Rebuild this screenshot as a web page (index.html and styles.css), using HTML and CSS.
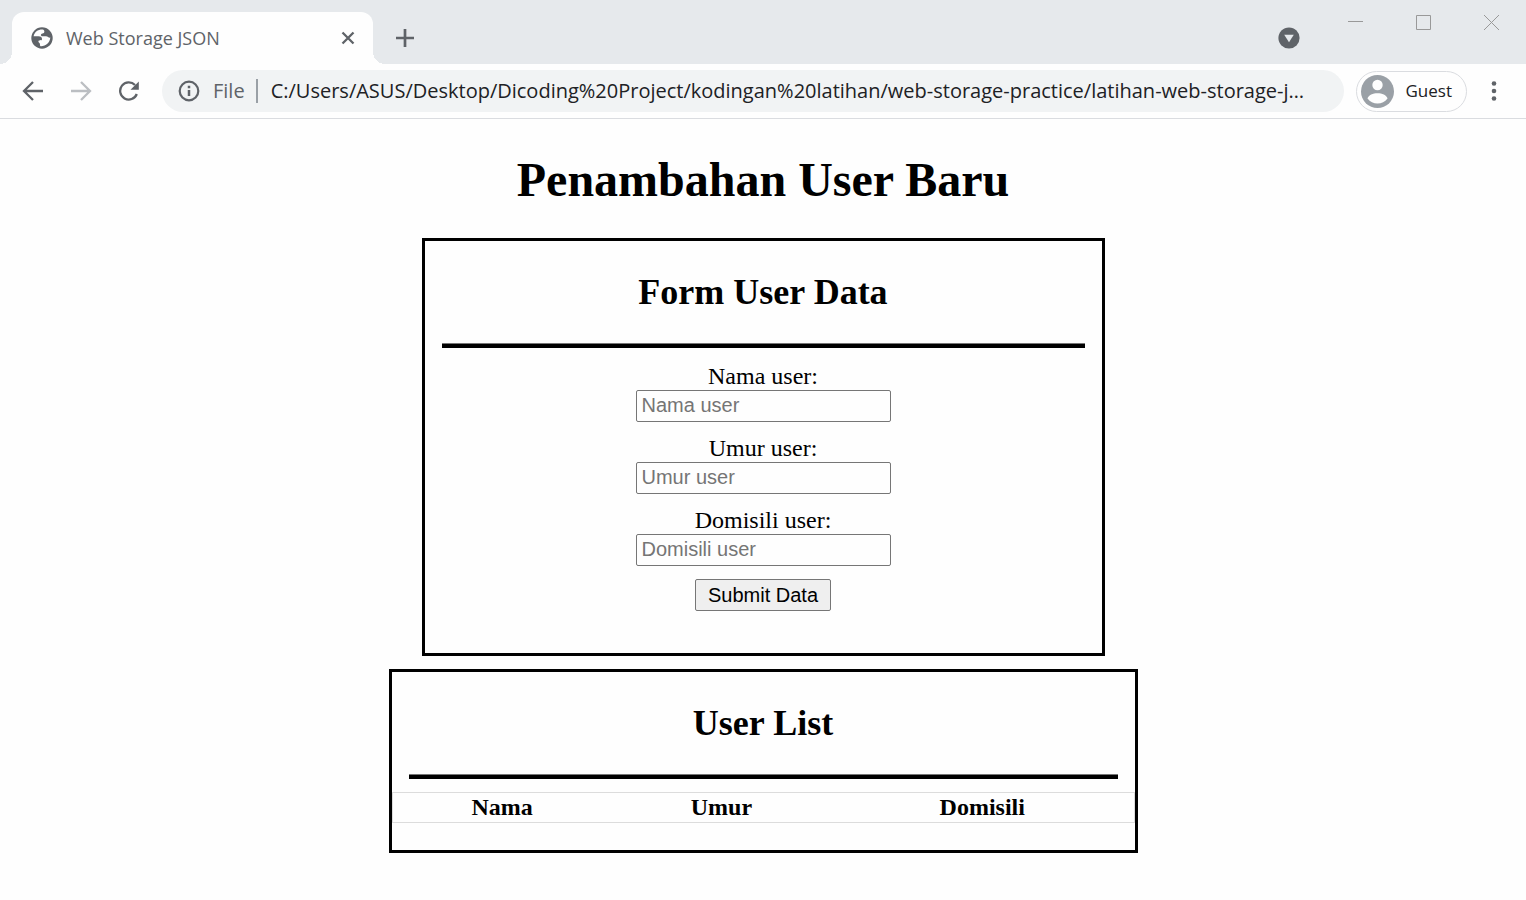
FILE: index.html
```html
<!DOCTYPE html>
<html lang="id">
<head>
<meta charset="utf-8">
<title>Web Storage JSON</title>
<link rel="stylesheet" href="styles.css">
</head>
<body>
<header class="browser">
  <div class="tab-strip">
    <div class="tab">
      <svg class="globe" viewBox="0 0 22 22" width="22" height="22" aria-hidden="true"><circle cx="11" cy="11" r="10.7" fill="#5f6368"/><path d="M12 2.500C7 2.200 3.500 5 2.600 9.200H7.500C10 9.200 11 10.500 11 12C11.200 13.200 10 13.400 8.200 13.400C7 13.400 7.200 15 8.400 16C9.500 17 8.500 18.500 9.500 19.300C14.500 19.600 19 16 19.300 10.600C17.500 11 17 9.300 15 9.300H11.500C9.300 9.200 9.500 6.800 11.500 6.500C13.800 6.300 14 3.600 12 2.500Z" fill="#fefefe"/></svg>
      <span class="tab-title">Web Storage JSON</span>
      <button class="icon-button" aria-label="Close tab"><svg viewBox="0 0 14 14" width="14" height="14"><path d="M1.5 1.5l11 11M12.5 1.5l-11 11" stroke="#5f6368" stroke-width="2.3"/></svg></button>
    </div>
    <button class="icon-button new-tab" aria-label="New tab"><svg viewBox="0 0 18 18" width="18" height="18"><path d="M9 0v18M0 9h18" stroke="#5f6368" stroke-width="2.7"/></svg></button>
    <button class="icon-button tab-search" aria-label="Search tabs"><svg viewBox="0 0 22 22" width="22" height="22"><circle cx="11" cy="11" r="10.6" fill="#5f6368"/><path d="M6.2 7.8h9.6L11 15.2z" fill="#e6e9ec"/></svg></button>
    <div class="window-controls">
      <button class="icon-button" aria-label="Minimize"><svg viewBox="0 0 15 16" width="15" height="16"><path d="M0 7.5h15" stroke="#999"/></svg></button>
      <button class="icon-button" aria-label="Maximize"><svg viewBox="0 0 15 16" width="15" height="16"><path d="M.5 1.500h14v14H.5z" fill="none" stroke="#999"/></svg></button>
      <button class="icon-button" aria-label="Close window"><svg viewBox="0 0 15 16" width="15" height="16"><path d="M0 1l15 15M15 1L0 16" stroke="#999"/></svg></button>
    </div>
  </div>
  <div class="toolbar">
    <nav class="history">
      <button class="icon-button" aria-label="Back"><svg viewBox="0 0 22 20" width="22" height="20"><path d="M21 10H2M11 1L2 10l9 9" fill="none" stroke="#5f6368" stroke-width="2.3"/></svg></button>
      <button class="icon-button" aria-label="Forward"><svg viewBox="0 0 22 20" width="22" height="20"><path d="M1 10h19M11 1l9 9-9 9" fill="none" stroke="#bbbec2" stroke-width="2.3"/></svg></button>
      <button class="icon-button" aria-label="Reload"><svg viewBox="0 0 22 20" width="22" height="20"><path d="M18.800 13A8.600 8.600 0 1 1 17 4" fill="none" stroke="#5f6368" stroke-width="2.3"/><path d="M20.800 .5v8.300h-8.300z" fill="#5f6368"/></svg></button>
    </nav>
    <div class="address">
      <svg viewBox="0 0 22 22" width="22" height="22" aria-hidden="true"><circle cx="11" cy="11" r="9.300" fill="none" stroke="#5f6368" stroke-width="2.200"/><path d="M11 10v6M11 5.800v2.500" stroke="#5f6368" stroke-width="2.500"/></svg>
      <label class="scheme" for="url">File</label>
      <input class="url" id="url" type="text" value="C:/Users/ASUS/Desktop/Dicoding%20Project/kodingan%20latihan/web-storage-practice/latihan-web-storage-j…">
    </div>
    <button class="profile">
      <svg viewBox="0 0 33 33" width="33" height="33" aria-hidden="true"><circle cx="16.500" cy="16.500" r="16.500" fill="#9aa0a6"/><circle cx="16.500" cy="10" r="5.200" fill="#fefefe"/><path d="M6.500 23.500C7.500 20 12 18.200 16.500 18.200S25.500 20 26.500 23.500C24 27 20.500 28.500 16.500 28.500S9 27 6.500 23.500z" fill="#fefefe"/></svg>
      <span>Guest</span>
    </button>
    <button class="icon-button menu" aria-label="Menu"><svg viewBox="0 0 6 20" width="6" height="20"><g fill="#5f6368"><circle cx="3" cy="2.500" r="2.300"/><circle cx="3" cy="10" r="2.300"/><circle cx="3" cy="17.500" r="2.300"/></g></svg></button>
  </div>
</header>
<main>
  <h1>Penambahan User Baru</h1>
  <section class="panel form-panel">
    <h2>Form User Data</h2>
    <hr>
    <form>
      <div class="field"><label for="nama">Nama user:</label><input id="nama" type="text" placeholder="Nama user"></div>
      <div class="field"><label for="umur">Umur user:</label><input id="umur" type="text" placeholder="Umur user"></div>
      <div class="field"><label for="domisili">Domisili user:</label><input id="domisili" type="text" placeholder="Domisili user"></div>
      <button class="submit" type="button">Submit Data</button>
    </form>
  </section>
  <section class="panel list-panel">
    <h2>User List</h2>
    <hr>
    <table>
      <thead><tr><th scope="col">Nama</th><th scope="col">Umur</th><th scope="col">Domisili</th></tr></thead>
    </table>
  </section>
</main>
</body>
</html>
```
FILE: styles.css
```css
* { box-sizing: border-box; }

body {
  margin: 0;
  min-height: 100vh;
  background: #fefefe;
  color: #000;
  font: 24px/27px "Liberation Serif", "Times New Roman", serif;
}

svg { display: block; flex: none; }

.icon-button {
  display: flex;
  padding: 0;
  border: 0;
  background: none;
}

/* Browser frame */
.browser {
  font-family: "Open Sans", "Segoe UI", sans-serif;
  border-bottom: 1px solid #dadce0;
}

.tab-strip {
  display: flex;
  align-items: center;
  height: 64px;
  padding: 12px 27px 0 12px;
  background: #e6e9ec;
}

.tab {
  position: relative;
  display: flex;
  align-items: center;
  gap: 13px;
  width: 361px;
  height: 52px;
  padding: 0 18px 0 19px;
  border-radius: 12px 12px 0 0;
  background: #fefefe;
}

.tab::before,
.tab::after {
  content: "";
  position: absolute;
  bottom: 0;
  width: 12px;
  height: 12px;
}

.tab::before {
  right: 100%;
  background: radial-gradient(circle at 0 0, #e6e9ec 12px, #fefefe 12px);
}

.tab::after {
  left: 100%;
  background: radial-gradient(circle at 100% 0, #e6e9ec 12px, #fefefe 12px);
}

.tab-title {
  flex: 1;
  color: #5f6368;
  font-size: 18px;
  line-height: 24px;
}

.new-tab { margin-left: 23px; }

.tab-search { margin-left: auto; }

.window-controls {
  display: flex;
  align-self: flex-start;
  gap: 53px;
  margin-left: 48px;
  padding-top: 2px;
}

.toolbar {
  display: flex;
  align-items: center;
  height: 54px;
  padding: 0 29px 0 22px;
}

.history {
  display: flex;
  gap: 26px;
}

.address {
  display: flex;
  flex: 1;
  align-items: center;
  min-width: 0;
  height: 42px;
  margin-left: 22px;
  padding: 0 26px 0 16px;
  border-radius: 21px;
  background: #f1f3f4;
  font-size: 20px;
  line-height: 24px;
}

.scheme {
  margin-left: 13px;
  padding-right: 11px;
  border-right: 2px solid #9aa0a6;
  color: #5f6368;
}

.url {
  flex: 1;
  min-width: 0;
  margin-left: 13px;
  padding: 0;
  border: 0;
  background: none;
  color: #202124;
  font: inherit;
}

.profile {
  display: flex;
  align-items: center;
  gap: 12px;
  height: 41px;
  margin-left: 12px;
  padding: 0 14px 0 4px;
  border: 1px solid #dadce0;
  border-radius: 21px;
  background: #fefefe;
  color: #202124;
  font: inherit;
  font-size: 17px;
  line-height: 24px;
}

.menu { margin-left: 24px; }

/* Page */
main {
  display: flex;
  flex-direction: column;
  align-items: center;
  padding: 0 12px 46px;
  text-align: center;
}

h1 {
  margin: 33px 0 31px;
  font-size: 48px;
  line-height: 55px;
}

h2 {
  margin: 31px 0 30px;
  font-size: 36px;
  line-height: 41px;
}

.panel {
  width: 100%;
  border: 3px solid #000;
}

.form-panel {
  max-width: 683px;
  padding-bottom: 42px;
}

.list-panel {
  max-width: 749px;
  margin-top: 13px;
  padding-bottom: 27px;
}

hr {
  height: 5px;
  margin: 0 17px;
  border: 0;
  border-top: 1px solid #767676;
  background: #000;
}

form {
  display: flex;
  flex-direction: column;
  align-items: center;
  gap: 13px;
  margin-top: 15px;
}

.field {
  display: flex;
  flex-direction: column;
  align-items: center;
}

.field input,
.submit {
  height: 32px;
  border: 1px solid #767676;
  border-radius: 2px;
  font: 20px/24px "Liberation Sans", Arial, sans-serif;
}

.field input {
  width: 255px;
  padding: 0 5px 2px;
  background: #fefefe;
}

.field input::placeholder { color: #757575; }

.submit {
  padding: 0 12px;
  background: #efefef;
  color: #000;
}

table {
  width: 100%;
  margin-top: 13px;
  border: 1px solid #dcdcdc;
  border-spacing: 0;
}

th { padding: 1px; }
```
